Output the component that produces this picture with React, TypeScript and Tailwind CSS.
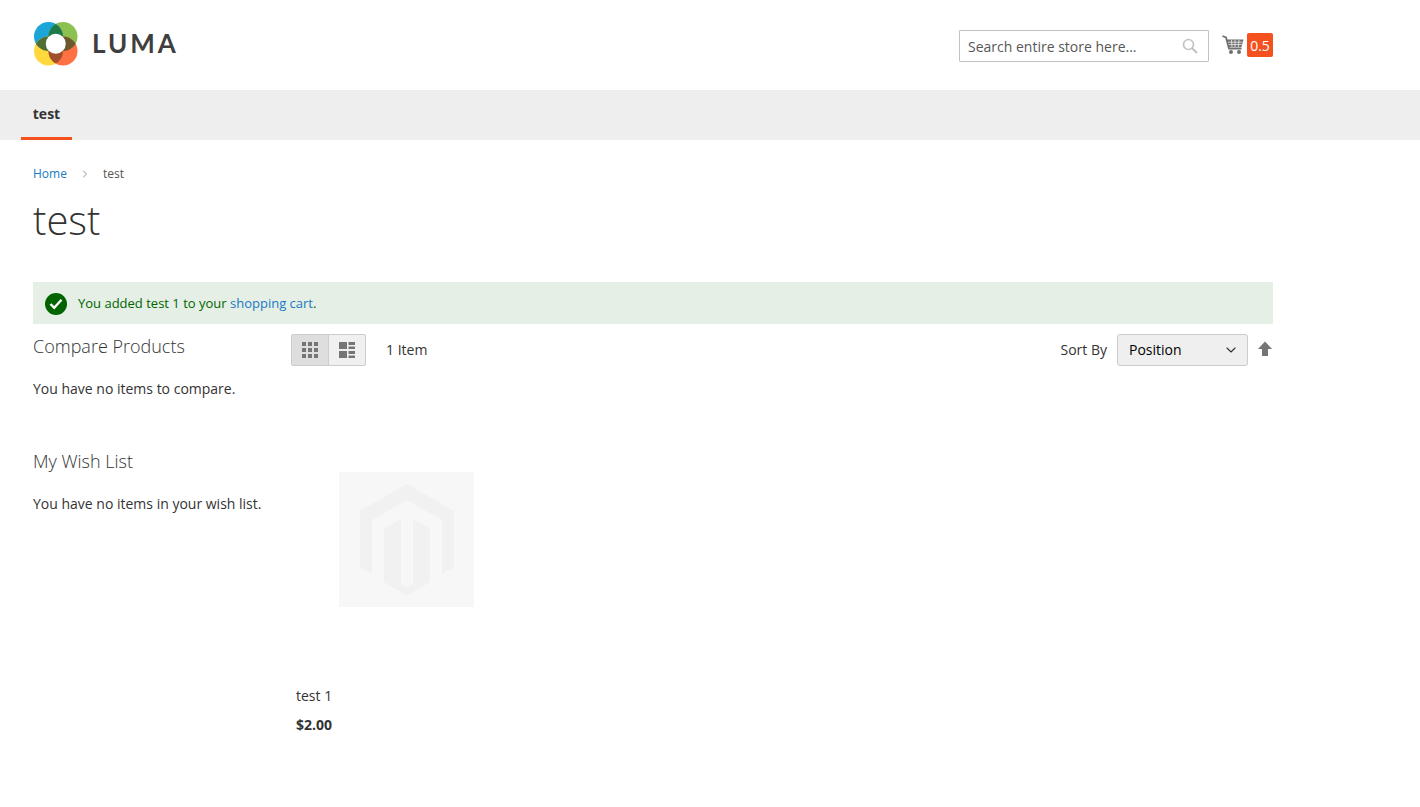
import { ChevronDown, ChevronRight } from "lucide-react";

function Logo() {
  return (
    <a className="flex items-center pl-[1px]" href="#">
      <svg width="44" height="44" viewBox="0 0 44 44" className="shrink-0">
        <defs>
          <clipPath id="clip-tl"><circle cx="14.5" cy="14.5" r="14.5" /></clipPath>
          <clipPath id="clip-br"><circle cx="29" cy="29" r="14.5" /></clipPath>
        </defs>
        <circle cx="14.5" cy="14.5" r="14.5" fill="#1ba5d8" />
        <circle cx="29" cy="14.5" r="14.5" fill="#8cc152" />
        <circle cx="14.5" cy="29" r="14.5" fill="#ffd83d" />
        <circle cx="29" cy="29" r="14.5" fill="#ff7043" />
        <circle cx="29" cy="14.5" r="14.5" fill="#1f7a4a" clipPath="url(#clip-tl)" />
        <circle cx="14.5" cy="29" r="14.5" fill="#4f6e35" clipPath="url(#clip-tl)" />
        <circle cx="29" cy="14.5" r="14.5" fill="#6b5a30" clipPath="url(#clip-br)" />
        <circle cx="14.5" cy="29" r="14.5" fill="#a0502a" clipPath="url(#clip-br)" />
        <circle cx="21.75" cy="21.75" r="10" fill="#fff" />
      </svg>
      <span className="ml-[14px] mb-[2px] font-['Lato',sans-serif] text-[26px] font-bold leading-none tracking-[3px] text-[#3f3f3f]">LUMA</span>
    </a>
  );
}

function CartIcon() {
  return (
    <svg width="22" height="20" viewBox="0 0 22 20" fill="none" className="shrink-0">
      <path d="M0.5 1 L4 2.4 L7 13.5 L19.5 13.5" stroke="#6f6f6f" strokeWidth="1.8" />
      <path d="M4.8 4.5 H21.5 L19.5 12 H6.8 Z" fill="#6f6f6f" />
      <path d="M9.5 5 L10 12 M13 5 V12 M17 5 L16.4 12 M6 7.2 H20.4 M6.6 9.6 H19.9" stroke="#fff" strokeWidth="0.7" />
      <circle cx="9" cy="17" r="2" fill="#6f6f6f" />
      <circle cx="17" cy="17" r="2" fill="#6f6f6f" />
    </svg>
  );
}

function SearchIcon() {
  return (
    <svg width="16" height="16" viewBox="0 0 16 16" fill="none" stroke="#c2c2c2" className="shrink-0">
      <circle cx="6.5" cy="6.5" r="5" strokeWidth="1.6" />
      <path d="M10.2 10.2 L15 15" strokeWidth="2" />
    </svg>
  );
}

function GridIcon() {
  return (
    <svg width="16" height="16" viewBox="0 0 16 16" fill="#757575">
      <rect x="0" y="0" width="4" height="4" />
      <rect x="6" y="0" width="4" height="4" />
      <rect x="12" y="0" width="4" height="4" />
      <rect x="0" y="6" width="4" height="4" />
      <rect x="6" y="6" width="4" height="4" />
      <rect x="12" y="6" width="4" height="4" />
      <rect x="0" y="12" width="4" height="4" />
      <rect x="6" y="12" width="4" height="4" />
      <rect x="12" y="12" width="4" height="4" />
    </svg>
  );
}

function ListIcon() {
  return (
    <svg width="16" height="16" viewBox="0 0 16 16" fill="#757575">
      <rect x="0" y="0" width="8" height="7" />
      <rect x="0" y="9" width="8" height="7" />
      <rect x="9.5" y="0" width="6.5" height="3" />
      <rect x="9.5" y="4.5" width="6.5" height="2.5" />
      <rect x="9.5" y="9" width="6.5" height="3" />
      <rect x="9.5" y="13.5" width="6.5" height="2.5" />
    </svg>
  );
}

function Placeholder() {
  return (
    <div className="flex h-[135px] w-[135px] items-center justify-center bg-[#f7f7f7]">
      <svg width="94" height="112" viewBox="0 0 94 112" fill="#f1f1f1">
        <path d="M47 0 L94 27 V83 L82 90 V36 L47 16 L12 36 V90 L0 83 V27 Z" />
        <path d="M24 45 L41 35 V100 L47 103 L53 100 V35 L70 45 V98 L47 112 L24 98 Z" />
      </svg>
    </div>
  );
}

export default function App() {
  return (
    <div className="min-h-[807px] bg-white font-['Open_Sans',sans-serif] text-[14px] text-[#333]">
      <header className="flex h-[90px] w-[1273px] items-start justify-between pl-[33px]">
        <div className="pt-[22px]">
          <Logo />
        </div>
        <div className="flex items-center pt-[30px]">
          <div className="flex h-[32px] w-[250px] items-center justify-between rounded-[1px] border border-[#c2c2c2] pl-[8px] pr-[10px]">
            <span className="text-[14px] text-[#575757]">Search entire store here...</span>
            <SearchIcon />
          </div>
          <div className="ml-[13px] mb-[3px]">
            <CartIcon />
          </div>
          <span className="ml-[3px] mb-[2px] flex h-[24px] w-[26px] items-center justify-center rounded-[2px] bg-[#f4511e] text-[14px] text-white">0.5</span>
        </div>
      </header>

      <nav className="h-[50px] bg-[#eeeeee] pl-[21px]">
        <div className="flex h-[50px] w-[51px] items-center justify-center border-b-[3px] border-[#f4511e] pb-[1px] text-[14px] font-bold">test</div>
      </nav>

      <main className="w-[1273px] pl-[33px]">
        <div className="flex items-center pt-[24px] text-[12px] leading-[20px]">
          <a className="text-[#1979c3]" href="#">Home</a>
          <ChevronRight size={12} strokeWidth={1.6} className="ml-[12px] mr-[12px] text-[#757575]" />
          <span className="text-[#555]">test</span>
        </div>

        <h1 className="mt-[11px] text-[40px] font-light leading-[50px]">test</h1>

        <div className="mt-[37px] flex h-[42px] items-center bg-[#e5efe5] pl-[12px] pt-[2px] text-[13px] text-[#006400]">
          <span className="flex h-[22px] w-[22px] items-center justify-center rounded-full bg-[#006400]">
            <svg width="14" height="12" viewBox="0 0 14 12" fill="none" stroke="#fff" strokeWidth="2.4">
              <path d="M1.5 6 L5.2 9.8 L12.5 1.8" />
            </svg>
          </span>
          <span className="ml-[11px]">
            You added test 1 to your <a className="text-[#1979c3]" href="#">shopping cart</a>.
          </span>
        </div>

        <div className="mt-[10px] flex">
          <aside className="w-[258px] shrink-0">
            <h2 className="text-[18px] font-light leading-[25px]">Compare Products</h2>
            <p className="mt-[20px] leading-[20px]">You have no items to compare.</p>
            <h2 className="mt-[50px] text-[18px] font-light leading-[25px]">My Wish List</h2>
            <p className="mt-[20px] leading-[20px]">You have no items in your wish list.</p>
          </aside>

          <section className="min-w-0 flex-1">
            <div className="flex h-[32px] items-center">
              <div className="flex h-[32px]">
                <span className="flex w-[38px] items-center justify-center rounded-l-[2px] border border-[#cccccc] bg-[#dedede]">
                  <GridIcon />
                </span>
                <span className="-ml-px flex w-[38px] items-center justify-center rounded-r-[2px] border border-[#cccccc] bg-[#f0f0f0]">
                  <ListIcon />
                </span>
              </div>
              <span className="ml-[20px] pb-[2px]">1 Item</span>
              <span className="ml-auto pb-[2px]">Sort By</span>
              <div className="ml-[10px] flex h-[32px] w-[131px] items-center justify-between rounded-[3px] border border-[#cccccc] bg-[#efefef] pb-[2px] pl-[11px] pr-[8px] text-black">
                <span>Position</span>
                <ChevronDown size={16} strokeWidth={1.6} className="mt-[2px] text-[#333]" />
              </div>
              <svg width="14" height="16" viewBox="0 0 14 16" fill="#757575" className="ml-[10px] mr-[1px] mb-[2px] shrink-0">
                <path d="M7 0.5 L14 8 H10 V15 H4 V8 H0 Z" />
              </svg>
            </div>

            <div className="ml-[48px] mt-[106px]">
              <Placeholder />
            </div>

            <div className="ml-[5px] mt-[79px] leading-[20px]">test 1</div>
            <div className="ml-[5px] mt-[9px] font-bold leading-[20px]">$2.00</div>
          </section>
        </div>
      </main>
    </div>
  );
}
